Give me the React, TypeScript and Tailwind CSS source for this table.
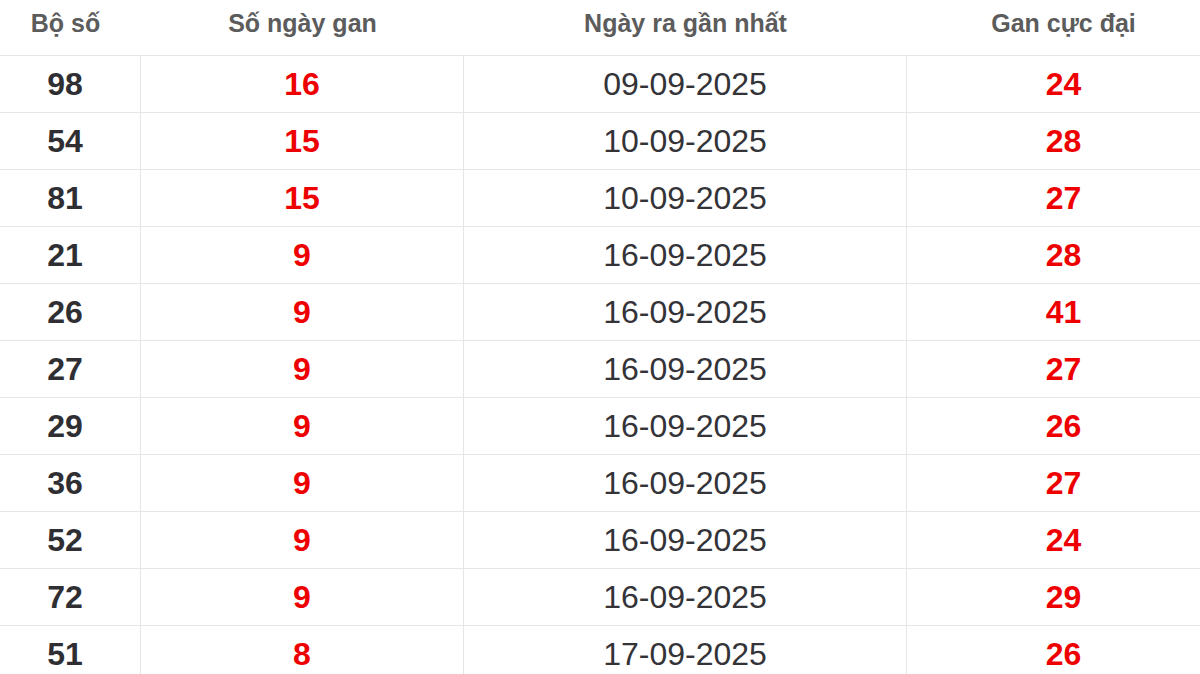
import * as React from "react";

type Row = { so: string; gan: string; ngay: string; max: string };

const ROWS: Row[] = [
  { so: "98", gan: "16", ngay: "09-09-2025", max: "24" },
  { so: "54", gan: "15", ngay: "10-09-2025", max: "28" },
  { so: "81", gan: "15", ngay: "10-09-2025", max: "27" },
  { so: "21", gan: "9", ngay: "16-09-2025", max: "28" },
  { so: "26", gan: "9", ngay: "16-09-2025", max: "41" },
  { so: "27", gan: "9", ngay: "16-09-2025", max: "27" },
  { so: "29", gan: "9", ngay: "16-09-2025", max: "26" },
  { so: "36", gan: "9", ngay: "16-09-2025", max: "27" },
  { so: "52", gan: "9", ngay: "16-09-2025", max: "24" },
  { so: "72", gan: "9", ngay: "16-09-2025", max: "29" },
  { so: "51", gan: "8", ngay: "17-09-2025", max: "26" },
];

// Fixed column widths; the table is shifted 10px left like the source crop.
const COLS = "grid grid-cols-[151px_323px_443px_313px]";

export default function App() {
  return (
    <div
      className="h-[674px] w-[1200px] overflow-hidden bg-white"
      style={{ fontFamily: '"Liberation Sans", Arial, sans-serif' }}
    >
      <div className="-ml-[10px] w-[1230px]">
        <div className={`${COLS} h-[56px] items-center border-b border-[#e6e6e6] text-[25px] font-bold text-[#5c5c5c]`}>
          <div className="pb-[7px] text-center">Bộ số</div>
          <div className="pb-[7px] text-center">Số ngày gan</div>
          <div className="pb-[7px] text-center">Ngày ra gần nhất</div>
          <div className="pb-[7px] text-center">Gan cực đại</div>
        </div>

        {ROWS.map((r) => (
          <div key={r.so} className={`${COLS} h-[57px] border-b border-[#e6e6e6] text-[32px] leading-none`}>
            <div className="flex items-center justify-center border-r border-[#e6e6e6] font-bold text-[#2f2f33]">
              {r.so}
            </div>
            <div className="flex items-center justify-center border-r border-[#e6e6e6] font-bold text-[#ee0000]">
              {r.gan}
            </div>
            <div className="flex items-center justify-center border-r border-[#e6e6e6] text-[#333338]">
              {r.ngay}
            </div>
            <div className="flex items-center justify-center font-bold text-[#ee0000]">{r.max}</div>
          </div>
        ))}
      </div>
    </div>
  );
}
